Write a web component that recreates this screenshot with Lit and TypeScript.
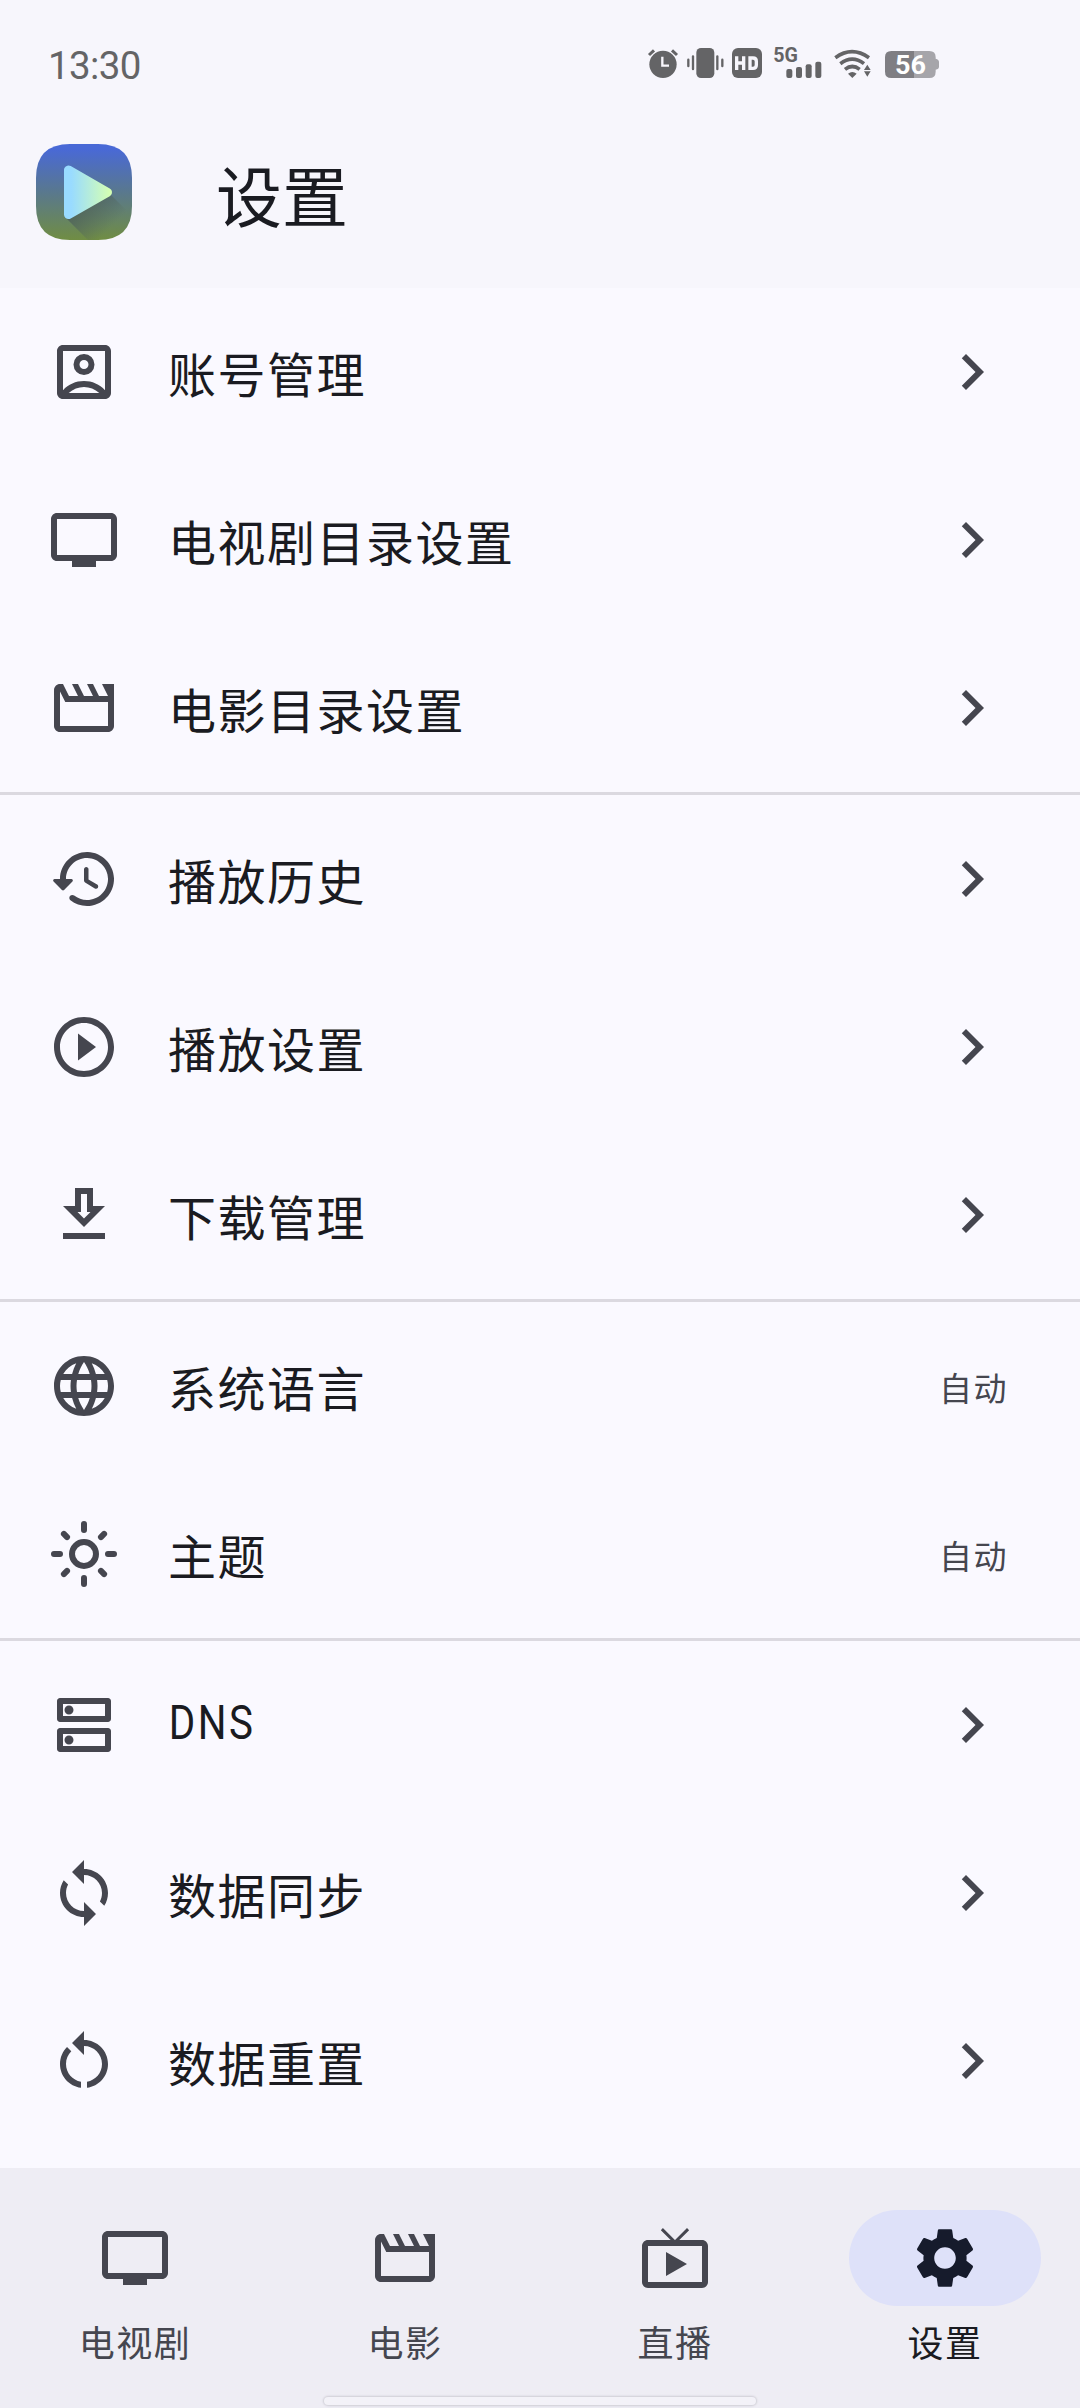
import { LitElement, html, css } from "lit";
import { customElement, property } from "lit/decorators.js";

const ICONS: Record<string, string> = {
  account:
    "M19 3H5c-1.11 0-2 .9-2 2v14c0 1.1.89 2 2 2h14c1.1 0 2-.9 2-2V5c0-1.1-.9-2-2-2zM5 5h14v13.05C17.2 16.1 14.75 15 12 15s-5.2 1.1-7 3.05zM12 6a3.5 3.5 0 1 0 0 7 3.5 3.5 0 0 0 0-7zm0 2a1.5 1.5 0 1 1 0 3 1.5 1.5 0 0 1 0-3zM6.9 19h10.2C15.65 17.7 13.85 17 12 17s-3.65.7-5.1 2z",
  tv: "M21 3H3c-1.1 0-2 .9-2 2v12c0 1.1.9 2 2 2h5v2h8v-2h5c1.1 0 2-.9 2-2V5c0-1.1-.9-2-2-2zm0 14H3V5h18v12z",
  movie:
    "M4 6.47L5.76 10H20v8H4V6.47M22 4h-4l2 4h-3l-2-4h-2l2 4h-3l-2-4H8l2 4H7L5 4H4c-1.1 0-1.99.9-1.99 2L2 18c0 1.1.9 2 2 2h16c1.1 0 2-.9 2-2V4z",
  history:
    "M13.26 3C8.17 2.86 4 6.95 4 12H2.21c-.45 0-.67.54-.35.85l2.79 2.8c.2.2.51.2.71 0l2.79-2.8c.31-.31.09-.85-.36-.85H6c0-3.9 3.18-7.05 7.1-7 3.72.05 6.85 3.18 6.9 6.9.05 3.91-3.1 7.1-7 7.1-1.61 0-3.1-.55-4.28-1.48-.4-.31-.96-.28-1.32.08-.42.43-.39 1.13.08 1.49C9 20.29 10.91 21 13 21c5.05 0 9.14-4.17 9-9.26-.13-4.69-4.05-8.61-8.74-8.74zm-.51 5c-.41 0-.75.34-.75.75v3.68c0 .35.19.68.49.86l3.12 1.85c.36.21.82.09 1.03-.26.21-.36.09-.82-.26-1.03l-2.88-1.71v-3.4c0-.4-.34-.74-.75-.74z",
  play: "M10 16.5l6-4.5-6-4.5v9zM12 2C6.48 2 2 6.48 2 12s4.48 10 10 10 10-4.48 10-10S17.52 2 12 2zm0 18c-4.41 0-8-3.59-8-8s3.59-8 8-8 8 3.59 8 8-3.59 8-8 8z",
  download:
    "M19 9h-4V3H9v6H5l7 7 7-7zm-8 2V5h2v6h1.17L12 13.17 9.83 11H11zm-6 7h14v2H5z",
  language:
    "M11.99 2C6.47 2 2 6.48 2 12s4.47 10 9.99 10C17.52 22 22 17.52 22 12S17.52 2 11.99 2zm6.93 6h-2.95c-.32-1.25-.78-2.45-1.38-3.56 1.84.63 3.37 1.91 4.33 3.56zM12 4.04c.83 1.2 1.48 2.53 1.91 3.96h-3.82c.43-1.43 1.08-2.76 1.91-3.96zM4.26 14C4.1 13.36 4 12.69 4 12s.1-1.36.26-2h3.38c-.08.66-.14 1.32-.14 2 0 .68.06 1.34.14 2H4.26zm.82 2h2.95c.32 1.25.78 2.45 1.38 3.56-1.84-.63-3.37-1.9-4.33-3.56zm2.95-8H5.08c.96-1.66 2.49-2.93 4.33-3.56C8.81 5.55 8.35 6.75 8.03 8zM12 19.96c-.83-1.2-1.48-2.53-1.91-3.96h3.82c-.43 1.43-1.08 2.76-1.91 3.96zM14.34 14H9.66c-.09-.66-.16-1.32-.16-2 0-.68.07-1.35.16-2h4.68c.09.65.16 1.32.16 2 0 .68-.07 1.34-.16 2zm.25 5.56c.6-1.11 1.06-2.31 1.38-3.56h2.95c-.96 1.65-2.49 2.93-4.33 3.56zM16.36 14c.08-.66.14-1.32.14-2 0-.68-.06-1.34-.14-2h3.38c.16.64.26 1.31.26 2s-.1 1.36-.26 2h-3.38z",
  dns: "M19 15v4H5v-4h14m1-2H4c-.55 0-1 .45-1 1v6c0 .55.45 1 1 1h16c.55 0 1-.45 1-1v-6c0-.55-.45-1-1-1zM7 18.5c-.82 0-1.5-.67-1.5-1.5s.68-1.5 1.5-1.5 1.5.67 1.5 1.5-.67 1.5-1.5 1.5zM19 5v4H5V5h14m1-2H4c-.55 0-1 .45-1 1v6c0 .55.45 1 1 1h16c.55 0 1-.45 1-1V4c0-.55-.45-1-1-1zM7 8.5c-.82 0-1.5-.67-1.5-1.5S6.18 5.5 7 5.5s1.5.68 1.5 1.5S7.83 8.5 7 8.5z",
  sync: "M12 4V1L8 5l4 4V6c3.31 0 6 2.69 6 6 0 1.01-.25 1.97-.7 2.8l1.46 1.46C19.54 15.03 20 13.57 20 12c0-4.42-3.58-8-8-8zm0 14c-3.31 0-6-2.69-6-6 0-1.01.25-1.97.7-2.8L5.24 7.74C4.46 8.97 4 10.43 4 12c0 4.42 3.58 8 8 8v3l4-4-4-4v3z",
  reset:
    "M12 5V2L8 6l4 4V7c3.31 0 6 2.69 6 6 0 2.97-2.17 5.43-5 5.91v2.02c3.95-.49 7-3.85 7-7.93 0-4.42-3.58-8-8-8zM6 13c0-1.65.67-3.15 1.76-4.24L6.34 7.34C4.9 8.79 4 10.79 4 13c0 4.08 3.05 7.44 7 7.93v-2.02c-2.83-.48-5-2.94-5-5.91z",
  live: "M9 10v8l7-4zm12-4h-7.58l3.29-3.29L16 2l-4 4h-.03l-4-4-.69.71L10.56 6H3c-1.1 0-2 .89-2 2v12c0 1.1.9 2 2 2h18c1.1 0 2-.9 2-2V8c0-1.11-.9-2-2-2zm0 14H3V8h18v12z",
  settings:
    "M19.14 12.94c.04-.3.06-.61.06-.94 0-.32-.02-.64-.07-.94l2.03-1.58c.18-.14.23-.41.12-.61l-1.92-3.32c-.12-.22-.37-.29-.59-.22l-2.39.96c-.5-.38-1.03-.7-1.62-.94L14.4 2.81c-.04-.24-.24-.41-.48-.41h-3.84c-.24 0-.43.17-.47.41L9.25 5.35C8.66 5.59 8.12 5.92 7.63 6.29L5.24 5.33c-.22-.08-.47 0-.59.22L2.74 8.87c-.12.21-.08.47.12.61l2.03 1.58c-.05.3-.09.63-.09.94s.02.64.07.94l-2.03 1.58c-.18.14-.23.41-.12.61l1.92 3.32c.12.22.37.29.59.22l2.39-.96c.5.38 1.03.7 1.62.94l.36 2.54c.05.24.24.41.48.41h3.84c.24 0 .44-.17.47-.41l.36-2.54c.59-.24 1.13-.56 1.62-.94l2.39.96c.22.08.47 0 .59-.22l1.92-3.32c.12-.22.07-.47-.12-.61l-2.01-1.58zM12 15.6c-1.98 0-3.6-1.62-3.6-3.6s1.62-3.6 3.6-3.6 3.6 1.62 3.6 3.6-1.62 3.6-3.6 3.6z",
  chevron: "M10 6L8.59 7.41 13.17 12l-4.58 4.59L10 18l6-6z",
};

@customElement("md-icon")
export class MdIcon extends LitElement {
  @property() name = "";

  static styles = css`
    :host {
      display: block;
      flex: none;
      width: 72px;
      height: 72px;
    }
    svg {
      display: block;
      width: 100%;
      height: 100%;
      fill: currentColor;
    }
    .rays {
      fill: none;
      stroke: currentColor;
      stroke-width: 2;
      stroke-linecap: round;
    }
  `;

  render() {
    if (this.name === "sun") {
      return html`<svg viewBox="0 0 24 24">
        <g class="rays">
          <circle cx="12" cy="12" r="4" />
          <path
            d="M12 2v2M12 20v2M2 12h2M20 12h2M5.3 5.3l1.05 1.05M17.65 17.65l1.05 1.05M18.7 5.3l-1.05 1.05M6.35 17.65L5.3 18.7"
          />
        </g>
      </svg>`;
    }
    return html`<svg viewBox="0 0 24 24">
      <path fill-rule="evenodd" d=${ICONS[this.name] ?? ""} />
    </svg>`;
  }
}

@customElement("status-bar")
export class StatusBar extends LitElement {
  static styles = css`
    :host {
      display: flex;
      justify-content: space-between;
      align-items: flex-start;
      height: 126px;
      padding: 48px 141px 0 48px;
      box-sizing: border-box;
      color: #646466;
      font-family: Roboto, "Noto Sans CJK SC", sans-serif;
    }
    .time {
      font-size: 38.5px;
      line-height: 36px;
      letter-spacing: -0.6px;
    }
    .icons {
      display: flex;
    }
    svg {
      display: block;
      height: 30px;
      fill: currentColor;
      overflow: visible;
    }
    .alarm {
      width: 30px;
      margin-right: 8.67px;
    }
    .vibrate {
      width: 36.33px;
      margin-right: 9px;
    }
    .hd {
      width: 30px;
      margin-right: 11.67px;
    }
    .signal {
      width: 47.33px;
      margin-right: 12.67px;
    }
    .wifi {
      width: 36.67px;
      margin-right: 14.67px;
    }
    .battery {
      width: 54px;
    }
    .line {
      fill: none;
      stroke: currentColor;
    }
    .knock {
      fill: none;
      stroke: #f7f6fc;
    }
    text {
      font-family: Roboto, sans-serif;
      font-weight: 700;
    }
    .white {
      fill: #fff;
    }
    .rest {
      fill: #a6a5aa;
    }
    .used {
      fill: #7f7e83;
    }
  `;

  render() {
    return html`
      <span class="time">13:30</span>
      <div class="icons">
        <svg class="alarm" viewBox="84 54 90 90">
          <circle cx="129" cy="103" r="41" />
          <path class="line" stroke-width="9" d="M87 75l15-14M156 61l15 14" />
          <path class="knock" stroke-width="7" d="M127 80v27h20" />
        </svg>
        <svg class="vibrate" viewBox="200 54 109 90">
          <rect x="228" y="54" width="54" height="90" rx="14" />
          <path
            class="line"
            stroke-width="7"
            stroke-linecap="round"
            d="M218 79v38M291 79v38M204 89v19M306 89v19"
          />
        </svg>
        <svg class="hd" viewBox="336 54 90 90">
          <rect x="336" y="54" width="90" height="90" rx="18" />
          <path
            class="knock"
            stroke-width="10"
            d="M350 79v41M371 79v41M350 99h21M390 84h9q10 0 10 10v11q0 10-10 10h-9z"
          />
        </svg>
        <svg class="signal" viewBox="461 54 142 90">
          <text x="459" y="97" font-size="60" textLength="74" lengthAdjust="spacingAndGlyphs">5G</text>
          <rect x="498" y="117" width="18" height="27" rx="6" />
          <rect x="527" y="111" width="18" height="33" rx="6" />
          <rect x="556" y="103" width="18" height="41" rx="6" />
          <rect x="585" y="95" width="18" height="49" rx="6" />
        </svg>
        <svg class="wifi" viewBox="641 54 110 90">
          <path
            class="line"
            stroke-width="11"
            d="M645 83q50-36 101 0M660 101q36-27 71 0M674 118q22-17 44 0"
          />
          <path d="M683 131q13-10 26 0l-13 13z" />
          <path d="M731 120l10-16 10 16zM731 124l10 16 10-16z" />
        </svg>
        <svg class="battery" viewBox="795 54 162 90">
          <path
            class="rest"
            d="M882 63h46q19 0 19 19v4q10 3 10 10v14q0 7-10 9v6q0 19-19 19h-46z"
          />
          <path class="used" d="M882 63h-68q-19 0-19 19v43q0 19 19 19h68z" />
          <text class="white" x="825" y="132" font-size="76" textLength="93" lengthAdjust="spacingAndGlyphs">56</text>
        </svg>
      </div>
    `;
  }
}

@customElement("app-logo")
export class AppLogo extends LitElement {
  static styles = css`
    :host {
      display: block;
      flex: none;
      width: 96px;
      height: 96px;
    }
    svg {
      display: block;
    }
  `;

  render() {
    return html`<svg width="96" height="96" viewBox="0 0 96 96">
      <defs>
        <linearGradient id="bg" x1="0" y1="0" x2="0" y2="1">
          <stop offset="0.05" stop-color="#4969d6" />
          <stop offset="0.5" stop-color="#59788e" />
          <stop offset="1" stop-color="#708d43" />
        </linearGradient>
        <linearGradient id="tri" gradientUnits="userSpaceOnUse" x1="28" y1="0" x2="76" y2="0">
          <stop offset="0.15" stop-color="#99dbff" />
          <stop offset="0.95" stop-color="#d4ffb4" />
        </linearGradient>
        <linearGradient id="shade" gradientUnits="userSpaceOnUse" x1="50" y1="60" x2="74" y2="84">
          <stop offset="0" stop-color="#50645a" stop-opacity="0.85" />
          <stop offset="1" stop-color="#50645a" stop-opacity="0" />
        </linearGradient>
        <clipPath id="shape">
          <path d="M0 48V34Q0 0 34 0H62Q96 0 96 34V62Q96 96 62 96H34Q0 96 0 62z" />
        </clipPath>
      </defs>
      <g clip-path="url(#shape)">
        <rect width="96" height="96" fill="url(#bg)" />
        <path d="M30 74L52 96H96V72L75 51z" fill="url(#shade)" />
        <path
          d="M32.500 26v44.500L71.500 48.300z"
          fill="url(#tri)"
          stroke="url(#tri)"
          stroke-width="9"
          stroke-linejoin="round"
        />
      </g>
    </svg>`;
  }
}

interface Item {
  icon: string;
  label: string;
  value?: string;
  latin?: boolean;
}

const GROUPS: Item[][] = [
  [
    { icon: "account", label: "账号管理" },
    { icon: "tv", label: "电视剧目录设置" },
    { icon: "movie", label: "电影目录设置" },
  ],
  [
    { icon: "history", label: "播放历史" },
    { icon: "play", label: "播放设置" },
    { icon: "download", label: "下载管理" },
  ],
  [
    { icon: "language", label: "系统语言", value: "自动" },
    { icon: "sun", label: "主题", value: "自动" },
  ],
  [
    { icon: "dns", label: "DNS", latin: true },
    { icon: "sync", label: "数据同步" },
    { icon: "reset", label: "数据重置" },
  ],
];

const TABS = [
  { icon: "tv", label: "电视剧" },
  { icon: "movie", label: "电影" },
  { icon: "live", label: "直播" },
  { icon: "settings", label: "设置" },
];

@customElement("app-root")
export class AppRoot extends LitElement {
  @property() active = "settings";

  static styles = css`
    :host {
      display: flex;
      flex-direction: column;
      width: 1080px;
      height: 2408px;
      overflow: hidden;
      background: #faf9ff;
      color: #1a1b21;
      font-family: "Noto Sans CJK SC", sans-serif;
    }
    .top {
      flex: none;
      height: 288px;
      background: #f7f6fc;
    }
    .app-bar {
      display: flex;
      align-items: flex-start;
      padding: 18px 36px 0;
    }
    .title {
      margin: 0 0 0 84px;
      padding-top: 1px;
      font-size: 66px;
      line-height: 96px;
      font-weight: 400;
    }
    .list {
      flex: 1;
      min-height: 0;
    }
    .group + .group {
      border-top: 3px solid #dbd9e0;
    }
    .row {
      display: flex;
      align-items: center;
      height: 168px;
      padding: 0 72px 0 48px;
      box-sizing: border-box;
    }
    md-icon {
      color: #45464f;
    }
    .label {
      flex: 1;
      margin-left: 48px;
      font-size: 48px;
      line-height: 72px;
      letter-spacing: 1.5px;
    }
    .latin {
      display: block;
      width: max-content;
      padding: 0 0 4px 1px;
      line-height: 70px;
      font-family: Roboto, sans-serif;
      letter-spacing: 3px;
      transform: scaleX(0.84);
      transform-origin: left;
    }
    .value {
      padding-top: 2px;
      font-size: 33px;
      line-height: 48px;
      letter-spacing: 1.5px;
      color: #45464f;
    }
    .nav {
      position: relative;
      flex: none;
      display: flex;
      height: 240px;
      background: #eeedf4;
    }
    .tab {
      flex: 1;
      display: flex;
      flex-direction: column;
      align-items: center;
      padding-top: 42px;
      color: #45464f;
      font-size: 36px;
      line-height: 48px;
      letter-spacing: 1.5px;
    }
    .pill {
      display: flex;
      align-items: center;
      justify-content: center;
      width: 192px;
      height: 96px;
      margin-bottom: 11px;
      border-radius: 48px;
    }
    .selected {
      color: #1a1b21;
    }
    .selected .pill {
      background: #dee1f9;
    }
    .selected md-icon {
      color: #161b2c;
    }
    .gesture {
      position: absolute;
      left: 324px;
      bottom: 3px;
      width: 432px;
      height: 8px;
      border-radius: 4px;
      background: #f3f2f8;
      box-shadow: 0 0 2px 1px #cfced6;
    }
  `;

  private row(item: Item) {
    return html`<div class="row">
      <md-icon name=${item.icon}></md-icon>
      <span class="label"
        >${item.latin ? html`<span class="latin">${item.label}</span>` : item.label}</span
      >
      ${item.value
        ? html`<span class="value">${item.value}</span>`
        : html`<md-icon name="chevron"></md-icon>`}
    </div>`;
  }

  render() {
    return html`
      <header class="top">
        <status-bar></status-bar>
        <div class="app-bar">
          <app-logo></app-logo>
          <h1 class="title">设置</h1>
        </div>
      </header>
      <main class="list">
        ${GROUPS.map(
          (group) => html`<section class="group">${group.map((item) => this.row(item))}</section>`,
        )}
      </main>
      <nav class="nav">
        ${TABS.map(
          (tab) => html`<div class="tab ${tab.icon === this.active ? "selected" : ""}">
            <div class="pill"><md-icon name=${tab.icon}></md-icon></div>
            <span>${tab.label}</span>
          </div>`,
        )}
        <div class="gesture"></div>
      </nav>
    `;
  }
}
